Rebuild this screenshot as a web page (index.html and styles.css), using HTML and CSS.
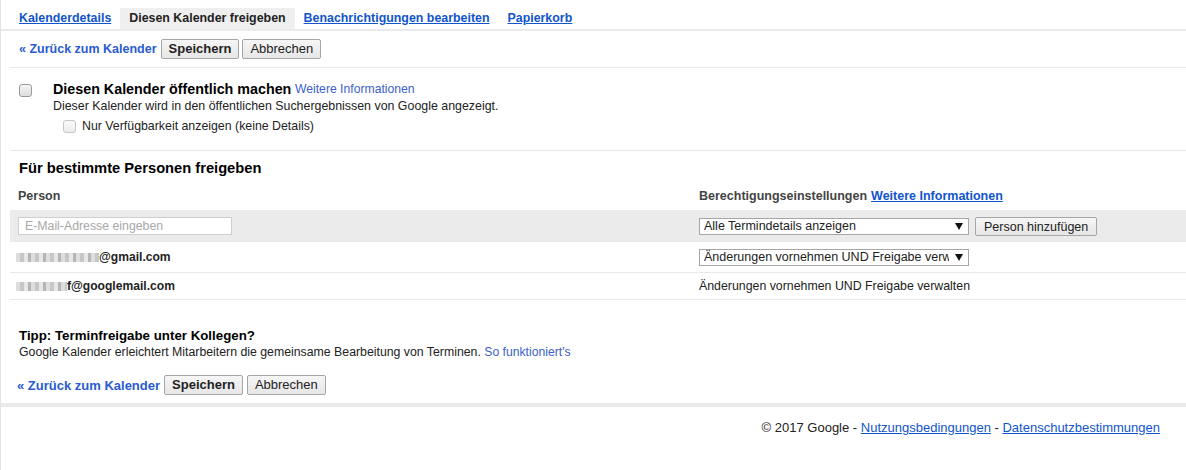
FILE: index.html
```html
<!DOCTYPE html>
<html lang="de">
<head>
<meta charset="utf-8">
<title>Diesen Kalender freigeben</title>
<link rel="stylesheet" href="styles.css">
</head>
<body>
<div class="page">
  <div class="tabs">
    <a class="tab" href="#">Kalenderdetails</a>
    <span class="tab active">Diesen Kalender freigeben</span>
    <a class="tab" href="#">Benachrichtigungen bearbeiten</a>
    <a class="tab" href="#">Papierkorb</a>
  </div>
  <div class="content">
    <div class="actions top">
      <a class="back" href="#">« Zurück zum Kalender</a>
      <button class="btn primary">Speichern</button>
      <button class="btn">Abbrechen</button>
    </div>

    <div class="public">
      <div class="pub-row">
        <span class="cb"></span>
        <div class="pub-text">
          <div class="pub-title"><b>Diesen Kalender öffentlich machen</b> <a class="info" href="#">Weitere Informationen</a></div>
          <div class="pub-desc">Dieser Kalender wird in den öffentlichen Suchergebnissen von Google angezeigt.</div>
        </div>
      </div>
      <div class="sub-row">
        <span class="cb disabled"></span>
        <span class="sub-label">Nur Verfügbarkeit anzeigen (keine Details)</span>
      </div>
    </div>

    <div class="share">
      <h2 class="share-title">Für bestimmte Personen freigeben</h2>
      <div class="grid head">
        <div class="cell">Person</div>
        <div class="cell">Berechtigungseinstellungen <a class="more" href="#">Weitere Informationen</a></div>
      </div>
      <div class="grid add">
        <div class="cell"><input class="email" type="text" placeholder="E-Mail-Adresse eingeben"></div>
        <div class="cell">
          <span class="sel wide"><select><option>Alle Termindetails anzeigen</option></select></span>
          <button class="btn add-btn">Person hinzufügen</button>
        </div>
      </div>
      <div class="grid person first">
        <div class="cell mail"><span class="blur b1"></span>@gmail.com</div>
        <div class="cell"><span class="sel wide"><select><option>Änderungen vornehmen UND Freigabe verwalten</option></select></span></div>
      </div>
      <div class="grid person second">
        <div class="cell mail"><span class="blur b2"></span>f@googlemail.com</div>
        <div class="cell perm">Änderungen vornehmen UND Freigabe verwalten</div>
      </div>
    </div>

    <div class="tip">
      <div class="tip-title">Tipp: Terminfreigabe unter Kollegen?</div>
      <div class="tip-text">Google Kalender erleichtert Mitarbeitern die gemeinsame Bearbeitung von Terminen. <a class="info" href="#">So funktioniert's</a></div>
    </div>

    <div class="actions bottom">
      <a class="back" href="#">« Zurück zum Kalender</a>
      <button class="btn primary">Speichern</button>
      <button class="btn">Abbrechen</button>
    </div>
  </div>
  <div class="bar"></div>
  <div class="footer">© 2017 Google - <a href="#">Nutzungsbedingungen</a> - <a href="#">Datenschutzbestimmungen</a></div>
</div>
</body>
</html>
```
FILE: styles.css
```css
html, body {
  margin: 0;
  padding: 0;
  background: #fff;
}
body {
  font-family: "Liberation Sans", Arial, sans-serif;
  color: #222;
  font-size: 13px;
}
.page {
  border-left: 1px solid #dde5ec;
  min-height: 470px;
  box-sizing: border-box;
}
a { color: #1155cc; }

.tabs {
  display: flex;
  padding: 8px 0 0 9px;
  border-bottom: 2px solid #ebebeb;
}
.tab {
  display: block;
  padding: 0 9px;
  height: 21px;
  line-height: 21px;
  font-weight: bold;
  font-size: 12.4px;
  color: #1155cc;
  text-decoration: underline;
}
.tab.active {
  background: #efefef;
  color: #222;
  text-decoration: none;
}

.content {
  margin-left: 9px;
}
.actions {
  display: flex;
  align-items: center;
  padding-left: 9px;
}
.actions.top {
  height: 36px;
  border-bottom: 1px solid #e8e8e8;
}
.back {
  font-weight: bold;
  font-size: 12.5px;
  text-decoration: none;
  color: #2a5bd0;
  margin-right: 4px;
}
.btn {
  font-family: "Liberation Sans", Arial, sans-serif;
  font-size: 13px;
  color: #222;
  height: 20px;
  padding: 0 7px;
  border: 1px solid #a6a6a6;
  border-radius: 2px;
  background: linear-gradient(#f6f6f6, #e6e6e6);
  margin-right: 3px;
  line-height: 18px;
}
.btn.primary { font-weight: bold; }
.actions.bottom {
  height: 20px;
  margin-top: 15px;
  padding-left: 7px;
}
.actions.bottom .back { font-size: 13px; margin-right: 4px; }
.actions.bottom .btn { font-size: 13px; padding: 0 7px; margin-right: 4px; }

.public {
  padding: 12px 0 0 9px;
  height: 70px;
  border-bottom: 1px solid #e8e8e8;
}
.pub-row {
  display: flex;
}
.cb {
  display: block;
  width: 11px;
  height: 11px;
  border: 1px solid #9a9a9a;
  border-radius: 3px;
  background: linear-gradient(#f4f4f4, #dedede);
  flex: none;
}
.pub-row .cb {
  margin-top: 4px;
  margin-right: 21px;
}
.cb.disabled {
  border-color: #c6c6c6;
  background: linear-gradient(#fafafa, #ececec);
}
.pub-title {
  line-height: 18px;
}
.pub-title b {
  font-size: 14.3px;
  color: #000;
}
.info {
  font-size: 12.2px;
  color: #3b5fcc;
  text-decoration: none;
}
.pub-title .info { vertical-align: 1px; }
.pub-desc {
  font-size: 12.4px;
  line-height: 15px;
}
.sub-row {
  display: flex;
  align-items: center;
  margin-left: 44px;
  margin-top: 5px;
}
.sub-row .cb { margin-right: 6px; }
.sub-label {
  font-size: 12.35px;
  color: #222;
}

.share-title {
  margin: 0;
  padding: 8px 0 0 9px;
  font-size: 14.7px;
  line-height: 18px;
  color: #000;
}
.grid {
  display: grid;
  grid-template-columns: 689px 1fr;
}
.cell {
  padding-left: 8px;
  display: flex;
  align-items: center;
}
.grid .cell + .cell { padding-left: 0; }
.head {
  height: 28px;
  margin-top: 5px;
  font-weight: bold;
  font-size: 12.5px;
  color: #444;
}
.more { margin-left: 4px; }
.add {
  background: #ebebeb;
  height: 32px;
}
.email {
  width: 214px;
  height: 18px;
  box-sizing: border-box;
  border: 1px solid #cfcfcf;
  padding: 0 6px;
  font-family: "Liberation Sans", Arial, sans-serif;
  font-size: 12.3px;
  background: #fff;
}
.email::placeholder { color: #a8a8a8; }
.sel {
  position: relative;
  display: inline-block;
}
.sel select {
  appearance: none;
  -webkit-appearance: none;
  width: 270px;
  height: 17px;
  border: 1px solid #a6a6a6;
  border-radius: 0;
  background: #fff;
  font-family: "Liberation Sans", Arial, sans-serif;
  font-size: 12.5px;
  color: #222;
  padding: 0 19px 0 4px;
  line-height: 15px;
  box-sizing: border-box;
}
.sel::after {
  content: "";
  position: absolute;
  right: 6px;
  top: 5px;
  border-left: 4px solid transparent;
  border-right: 4px solid transparent;
  border-top: 7px solid #111;
  pointer-events: none;
}
.add-btn {
  margin-left: 6px;
  height: 19px;
  font-size: 12.5px;
  padding: 0 8px;
}
.person {
  border-bottom: 1px solid #e8e8e8;
}
.person.first { height: 30px; }
.person.second { height: 26px; }
.mail {
  font-weight: bold;
  font-size: 12.1px;
  color: #222;
}
.blur {
  display: inline-block;
  height: 9px;
  margin-left: -2px;
  background: repeating-linear-gradient(90deg, #d8d8d8 0 4px, #bdbdbd 4px 8px, #e3e3e3 8px 12px, #a9a9a9 12px 15px);
  opacity: 0.85;
}
.b1 { width: 83px; }
.b2 { width: 51px; }
.perm { font-size: 12.35px; }

.tip {
  padding: 28px 0 0 9px;
}
.tip-title {
  font-weight: bold;
  font-size: 13.3px;
  color: #000;
  line-height: 16px;
}
.tip-text {
  font-size: 12.3px;
  line-height: 16px;
}

.bar {
  height: 4px;
  background: #ebebeb;
  margin-top: 8px;
}
.footer {
  text-align: right;
  padding: 13px 26px 0 0;
  font-size: 13px;
  color: #222;
}
```
